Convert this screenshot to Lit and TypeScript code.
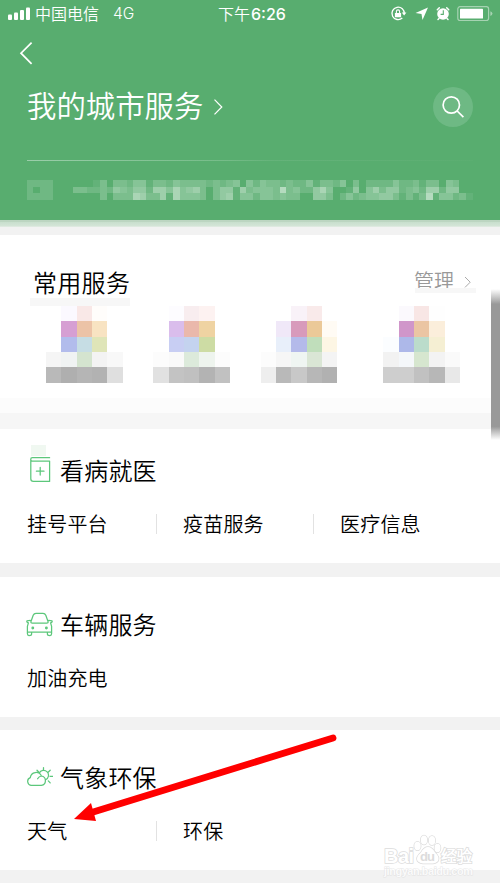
import { LitElement, html, svg, css } from "lit";
import { customElement, property } from "lit/decorators.js";

const NOTICE_ROWS = [
  "2222000000130332441332433332323404243323224133240302222422313304300",
  "2022000332232543552664745630355163444383422574001504635523426625500",
  "2222000000030333763361744430356144244343300553024234455313138144231",
];

const SERVICES: string[][] = [
  [
    "", "#fbf9ff", "#f9e8e7", "#fffdfb", "",
    "", "#d69fd3", "#ecc3a7", "#f8e3c2", "",
    "", "#b2bcec", "#c6dde4", "#dfe5b8", "",
    "#f5f5f5", "#f0f3f3", "#d4e4cf", "#f3f3f3", "#f8f8f8",
    "#b9b9b9", "#afafaf", "#b5b5b5", "#b2b2b2", "#dfdfdf",
  ],
  [
    "", "#fdfcff", "#f8edef", "#fdf2f1", "",
    "", "#dabdec", "#eab8ab", "#efd3a2", "",
    "", "#c8cef3", "#c4d3ef", "#cddca4", "",
    "#fcfcfc", "#f9f9f9", "#dceadb", "#eef4ee", "#fcfcfc",
    "#e1e1e1", "#c3c3c3", "#c0c0c0", "#b3b3b3", "#c1c1c1",
  ],
  [
    "", "", "#f9f2f8", "#f9eaea", "",
    "", "#f0e8f8", "#d89abb", "#ebc998", "#fffbf4",
    "", "#e8effa", "#b4baea", "#c0debb", "#fdf6e4",
    "#fcfcfc", "#f6f6f6", "#eff5f2", "#dae6d5", "#f4f4f4",
    "#eeeeee", "#b9b9b9", "#c8c8c8", "#b7b7b7", "#b1b1b1",
  ],
  [
    "", "#fbf9fd", "#f8e6e5", "#fefefe", "",
    "", "#d096ca", "#ebc5a3", "#fbeedb", "",
    "#fbfdff", "#adb8e9", "#bbdccb", "#f5efd3", "",
    "#f2f2f2", "#f4f7fa", "#d6e6cf", "#f3f3f3", "#fafafa",
    "#cecece", "#cecece", "#c1c1c1", "#b7b7b7", "#e8e8e8",
  ],
];

const bookIcon = svg`<path d="M23.6 1.7H6.4A1.7 1.7 0 0 0 6.4 5.1H23.6V25.4H7.4Q4.8 25.4 4.8 22.8V3.4M14.2 11.4V19M10.4 15.2H18"/>`;
const carIcon = svg`<path d="M4.8 12 7.2 5.2Q8 3.3 10 3.3H17Q19 3.3 19.8 5.2L22.2 12Q22.2 13 20.8 13H6.2Q4.8 13 4.8 12ZM4.3 10.4.9 10.9Q.4 12.1 2.4 12.9L1.4 16.4V23.6Q1.4 25.6 3 25.6 5.6 25.6 5.6 24V22.1H1.6M22.7 10.4 26.1 10.9Q26.6 12.1 24.6 12.9L25.6 16.4V23.6Q25.6 25.6 24 25.6 21.4 25.6 21.4 24V22.1H25.4M5.6 22.1H21.4"/><circle cx="6.8" cy="18" r=".8" fill="#5cc77b"/><circle cx="20.4" cy="18" r=".8" fill="#5cc77b"/>`;
const weatherIcon = svg`<path d="M5 22.3A4 4 0 0 1 4.3 14.6 5.8 5.8 0 0 1 15.4 13 4.7 4.7 0 0 1 15.4 22.3ZM11.6 15.8Q13 13.3 15.4 13M13.2 10.2A4.9 4.9 0 1 1 19.6 16.8M17.5 4.6V7.4M11 7.2 12.7 9M24.2 7.2 22.4 9M24 13.3H26.7M22.3 17.9 24.2 19.9"/>`;

const SECTIONS = [
  { title: "看病就医", icon: bookIcon, items: ["挂号平台", "疫苗服务", "医疗信息"] },
  { title: "车辆服务", icon: carIcon, items: ["加油充电"] },
  { title: "气象环保", icon: weatherIcon, items: ["天气", "环保"] },
];

@customElement("service-section")
class ServiceSection extends LitElement {
  @property() heading = "";
  @property({ attribute: false }) icon: unknown;
  @property({ attribute: false }) items: string[] = [];

  static styles = css`
    :host { display: block; background: #fff; height: 140px; box-sizing: border-box; padding: 27px 0 0 26px; }
    .head { display: flex; align-items: center; height: 40px; }
    .icon { width: 27px; height: 28px; fill: none; stroke: #5cc77b; stroke-width: 1.25; stroke-linecap: round; stroke-linejoin: round; }
    .title { margin: 0 0 0 7px; font-size: 24px; letter-spacing: .2px; line-height: 40px; color: #000; }
    .items { display: grid; grid-template-columns: 130px 157px 1fr; margin-top: 16px; }
    .item { font-size: 20px; letter-spacing: .2px; line-height: 36px; display: flex; align-items: center; color: #000; padding-left: 1px; }
    .item + .item { padding-left: 0; }
    .item + .item::before { content: ""; width: 1px; height: 20px; background: #e2e2e2; margin: 0 26px 0 0; }
  `;

  render() {
    return html`
      <div class="head">
        <svg class="icon" viewBox="0 0 27 28">${this.icon}</svg>
        <span class="title">${this.heading}</span>
      </div>
      <div class="items">${this.items.map((i) => html`<span class="item">${i}</span>`)}</div>
    `;
  }
}

@customElement("app-root")
class AppRoot extends LitElement {
  static styles = css`
    :host {
      display: block; position: relative; width: 500px; height: 889px; overflow: hidden;
      background: #fff; font-family: "Noto Sans CJK SC DemiLight", "Noto Sans CJK SC", sans-serif; font-weight: 350;
    }
    .header { height: 220px; background: #58ad6f; color: #fff; display: flex; flex-direction: column; }
    .status { height: 28px; display: grid; grid-template-columns: 218px 1fr 112px; align-items: center; font-size: 16px; line-height: 28px; }
    .carrier { display: flex; align-items: center; padding-left: 8px; }
    .cjk { margin-top: -2px; }
    .bars { width: 22px; height: 14px; margin-right: 5px; }
    .net { font-family: Inter, sans-serif; font-size: 15.5px; margin-left: 14px; font-weight: 300; }
    .time { display: flex; align-items: center; font-weight: 400; }
    .clock { font-family: Inter, sans-serif; font-size: 16px; font-weight: 500; letter-spacing: 0; margin-left: 1px; }
    .tray { width: 112px; height: 28px; }
    .nav { height: 50px; padding: 12px 0 0 18px; box-sizing: border-box; }
    .back { display: block; width: 16px; height: 26px; }
    .hero { height: 58px; display: flex; align-items: center; padding: 0 27px; }
    .city { font-size: 29.4px; line-height: 58px; margin-top: -6px; }
    .more { width: 12px; height: 20px; margin: 0 0 0 10px; }
    .search { width: 40px; height: 40px; border-radius: 50%; background: #6eb984; margin-left: auto; }
    .rule { height: 1px; margin: 24px 27px 0; background: linear-gradient(90deg, #9bceaa, #75bc88 45%, #65b37a 55%, #5bae71); }
    .notice { display: grid; grid-template: repeat(3, 6.667px) / repeat(67, 6.667px); margin: 19px 0 0 26.67px; }
    .dot { background: #fff; }
    .shade { height: 15px; background: linear-gradient(#bcd5c1 0 2px, #c8dfcd 2px, #d4e5d7 6px, #f2f2f2 7.5px); }
    .common { height: 163px; }
    .chead { display: flex; align-items: center; height: 40px; padding: 27px 27px 1px 33px; line-height: 40px; }
    .ctitle { font-size: 24px; letter-spacing: .3px; }
    .manage { margin: -3px 0 0 auto; font-size: 20px; color: #999; display: flex; align-items: center; }
    .marrow { width: 8px; height: 14px; margin: 2px 1px 0 10px; }
    .smudges { display: flex; justify-content: space-between; align-items: flex-start; height: 8px; margin: -5px 24px 0 30px; }
    .smudge { width: 100px; height: 8px; background: #f7f7f7; }
    .smudge2 { width: 61px; height: 5px; background: #f7f7f7; margin-top: -10px; }
    .services { display: grid; grid-template-columns: 107.4px 107.3px 122.6px 77px; margin: 0 0 0 46px; }
    .mosaic { display: grid; grid-template: repeat(5, 15.35px) / repeat(5, 15.35px); }
    .fade { height: 15px; background: #fcfcfc; }
    .band { height: 16px; background: #f6f6f6; }
    .gap { height: 13.5px; background: #f2f2f2; }
    .first { height: 134px; padding-top: 21px; }
    .tail { height: 13px; background: #f2f2f2; }
    .scroll { position: absolute; right: 0; top: 289px; width: 9.3px; height: 151px; background: linear-gradient(transparent, #999 10%, #999 91%, transparent); }
    .tint { position: absolute; left: 31px; top: 445px; width: 15px; height: 11px; background: #f0f8f1; }
    .overlay { position: absolute; left: 0; top: 720px; width: 500px; height: 169px; }
    .wm { font-weight: 700; fill: #fff; stroke: #dcdcdc; stroke-width: 1.5; paint-order: stroke; }
    .latin { font-family: "Liberation Sans", sans-serif; }
    .du { fill: #dcdcdc; stroke: none; }
  `;

  render() {
    return html`
      <div class="header">
        <div class="status">
          <div class="carrier">
            <svg class="bars" viewBox="0 0 22 14" fill="#fff"><rect y="7.5" width="4" height="5.5" rx="1"/><rect x="6" y="5.5" width="4" height="7.5" rx="1"/><rect x="12" y="3" width="4" height="10" rx="1"/><rect x="18" y=".5" width="4" height="12.5" rx="1"/></svg>
            <span class="cjk">中国电信</span><span class="net">4G</span>
          </div>
          <div class="time"><span class="cjk">下午</span><span class="clock">6:26</span></div>
          <svg class="tray" viewBox="388 0 112 28" fill="none" stroke="#fff">
            <path stroke-width="1.3" d="M404.3 14A6.2 6.2 0 1 0 402.3 18"/>
            <path fill="#fff" stroke="none" d="M401.8 12.6H406.4L404.1 15.4ZM394.9 13H401.1V17.2H394.9Z"/>
            <path stroke-width="1.1" d="M396.4 13V11.5A1.6 1.6 0 0 1 399.6 11.5V13"/>
            <path fill="#fff" stroke="none" d="M428 7.5 415.5 13 421.5 14 422.5 20Z"/>
            <circle cx="443" cy="14" r="5.8" fill="#fff" stroke="none"/>
            <path stroke-width="1.5" stroke-linecap="round" d="M437.3 9.8 439.3 7.8M448.7 9.8 446.7 7.8M439 18.5 438 19.5M447 18.5 448 19.5"/>
            <path stroke="#58ad6f" stroke-width="1.1" d="M443.3 10.3V14.4H440.6"/>
            <rect x="457.8" y="6.7" width="30.8" height="13.8" rx="2.2" stroke="#a6d3b2" stroke-width="1.2"/>
            <rect x="460" y="8.8" width="23" height="9.8" rx=".6" fill="#fff" stroke="none"/>
            <path fill="#a6d3b2" stroke="none" d="M490.4 11.3Q492.4 12 492.4 13.6T490.4 16Z"/>
          </svg>
        </div>
        <div class="nav"><svg class="back" viewBox="0 0 16 26" fill="none" stroke="#fff" stroke-width="1.7"><path d="M13.6 2.6 3 13.2 13.6 23.8"/></svg></div>
        <div class="hero">
          <span class="city">我的城市服务</span>
          <svg class="more" viewBox="0 0 12 20" fill="none" stroke="#fff" stroke-width="1.2"><path d="M1.5 2.6 8.8 10 1.5 17.4"/></svg>
          <svg class="search" viewBox="0 0 40 40" fill="none" stroke="#fff" stroke-width="1.7"><circle cx="18.3" cy="18" r="8.2"/><path d="M24.2 24 30.4 30.2"/></svg>
        </div>
        <div class="rule"></div>
        <div class="notice">
          ${NOTICE_ROWS.map((r) => [...r].map((d) => html`<i class="dot" style="opacity:${Number(d) * 0.07}"></i>`))}
        </div>
      </div>
      <div class="shade"></div>
      <div class="common">
        <div class="chead">
          <span class="ctitle">常用服务</span>
          <span class="manage">管理<svg class="marrow" viewBox="0 0 8 14" fill="none" stroke="#aaa"><path d="M1 2 6.2 7.2 1 12.4"/></svg></span>
        </div>
        <div class="smudges"><div class="smudge"></div><div class="smudge2"></div></div>
        <div class="services">
          ${SERVICES.map((s) => html`<div class="mosaic">${s.map((c) => html`<i style="background:${c || "#fff"}"></i>`)}</div>`)}
        </div>
      </div>
      <div class="fade"></div>
      <div class="band"></div>
      ${SECTIONS.map((s, i) => html`
        ${i ? html`<div class="gap"></div>` : ""}
        <service-section class=${i ? "" : "first"} .heading=${s.title} .icon=${s.icon} .items=${s.items}></service-section>
      `)}
      <div class="tail"></div>
      <div class="tint"></div>
      <div class="scroll"></div>
      <svg class="overlay" viewBox="0 720 500 169">
        <path d="M90 813 333 738" stroke="#f00" stroke-width="6.8" stroke-linecap="round"/>
        <path d="M74 819 91 803 96 821Z" fill="#f00"/>
        <g class="wm">
          <text class="latin" x="384" y="863" font-size="20" textLength="30">Bai</text>
          <ellipse cx="417.5" cy="846" rx="3.2" ry="4.2"/><ellipse cx="424" cy="840" rx="3.2" ry="4.6"/>
          <ellipse cx="432" cy="840.5" rx="3.2" ry="4.6"/><ellipse cx="437.5" cy="848" rx="3" ry="4.2"/>
          <path d="M428 847Q432 847 435 852.5 440 857 438 861 436 864 428 863.5 420 864 417.5 861 415.5 857 421 852.5 424 847 428 847Z"/>
          <text class="latin du" x="420" y="861" font-size="13" textLength="15">du</text>
          <text x="441" y="862" font-size="15.5" textLength="31">经验</text>
          <text class="latin" x="384" y="875" font-size="11" textLength="89" stroke-width="1" opacity=".65">jingyan.baidu.com</text>
        </g>
      </svg>
    `;
  }
}
